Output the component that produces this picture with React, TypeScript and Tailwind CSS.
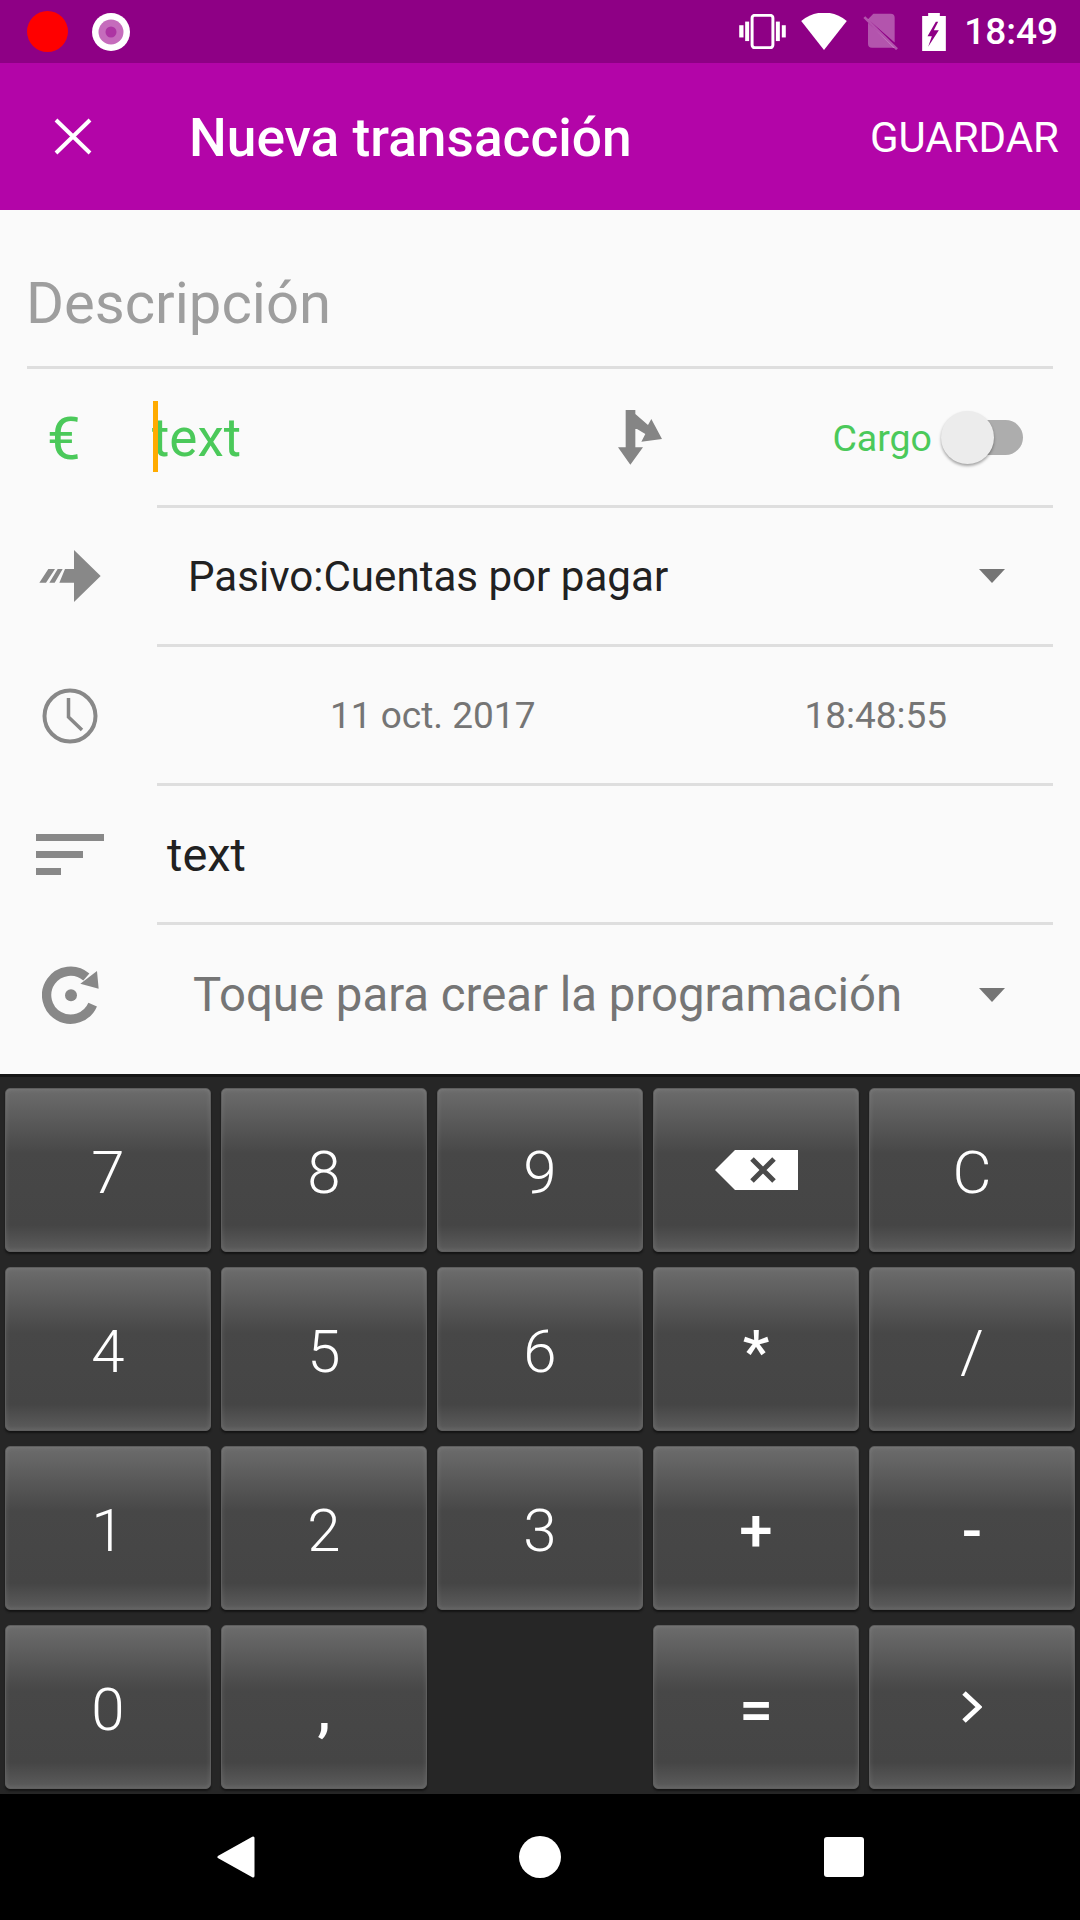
import React from "react";

const Key = ({ children }: { children?: React.ReactNode }) => (
  <div className="h-[164px] rounded-[5px] border border-[#5e5e5e] shadow-[inset_0_0_5px_rgba(255,255,255,0.12),0_2px_2px_#141414] bg-[linear-gradient(180deg,#6c6c6c_0%,#474747_40%,#454545_84%,#5c5c5c_100%)] flex items-center justify-center text-white text-[60px] font-[350] leading-none">
    {children}
  </div>
);

const T = ({ children }: { children: React.ReactNode }) => <span className="mt-[5px]">{children}</span>;
const S = ({ children }: { children: React.ReactNode }) => <span className="mt-[5px] font-medium">{children}</span>;

const Caret = () => (
  <svg width="26" height="14" viewBox="0 0 26 14"><path d="M0 0H26L13 14Z" fill="#757575" /></svg>
);

export default function App() {
  return (
    <div className="w-[1080px] h-[1920px] flex flex-col bg-[#fafafa] overflow-hidden font-['Roboto',sans-serif]">
      {/* status bar */}
      <div className="h-[63px] bg-[#8e0085] flex items-center pl-[27px] pr-[22px] text-white shrink-0">
        <div className="w-[41px] h-[41px] rounded-full bg-[#ff0000]" />
        <svg className="ml-[24px]" width="38" height="38" viewBox="0 0 38 38">
          <circle cx="19" cy="19" r="19" fill="#fff" />
          <circle cx="19" cy="19" r="12.500" fill="#c56cbc" />
          <circle cx="19" cy="19" r="5.500" fill="#ad35a3" />
        </svg>
        <div className="flex-1" />
        <svg width="47" height="35" viewBox="117 42 141 106" fill="#fff">
          <rect x="117" y="76" width="13" height="37" />
          <rect x="135" y="65" width="12" height="59" />
          <rect x="156" y="46" width="63" height="98" rx="8" fill="none" stroke="#fff" strokeWidth="9" />
          <rect x="228" y="65" width="12" height="59" />
          <rect x="246" y="76" width="12" height="37" />
        </svg>
        <svg className="ml-[15px]" width="46" height="37" viewBox="303 38 138 112">
          <path d="M303 62C345 28 399 28 441 62L372 150Z" fill="#fff" />
        </svg>
        <svg className="ml-[16px]" width="35" height="37" viewBox="490 42 105 110">
          <path d="M505 60 521 44H573a12 12 0 0 1 12 12V130ZM505 71 585 146a12 12 0 0 1-8 0H517a12 12 0 0 1-12-12Z" fill="#fff" fillOpacity="0.33" />
          <path d="M494 54 592 150" stroke="#fff" strokeOpacity="0.33" strokeWidth="8" />
        </svg>
        <svg className="ml-[24px]" width="24" height="38" viewBox="667 36 71 114">
          <path fillRule="evenodd" d="M685 36H720V45H738V150H667V45H685ZM708 62 683 106H696L685 137 717 88H702L715 62Z" fill="#fff" />
        </svg>
        <span className="ml-[18px] text-[37px] font-medium leading-none">18:49</span>
      </div>

      {/* toolbar */}
      <div className="h-[147px] bg-[#b305a8] flex items-center text-white shrink-0 pr-[21px]">
        <svg className="ml-[54px]" width="38" height="37" viewBox="0 0 38 37"><path d="M2 2 36 35M36 2 2 35" stroke="#fff" strokeWidth="4" /></svg>
        <span className="ml-[97px] mt-[4px] text-[53.25px] leading-none font-medium">Nueva transacción</span>
        <span className="ml-auto mt-[3px] text-[42px] leading-none">GUARDAR</span>
      </div>

      {/* form */}
      <div className="flex-1 flex flex-col text-[#212121]">
        <div className="h-[159px] mx-[27px] border-b-[3px] border-[#dedede] flex items-center pt-[30px] shrink-0">
          <span className="ml-[-1px] text-[58px] leading-none text-[#9e9e9e]">Descripción</span>
        </div>

        <div className="h-[139px] flex shrink-0">
          <div className="w-[157px] flex items-center pl-[47px]">
            <span className="text-[60px] leading-none text-[#4bc95a]">€</span>
          </div>
          <div className="flex-1 mr-[27px] border-b-[3px] border-[#dedede] flex items-center relative">
            <span className="ml-[-5px] mt-[3px] text-[53px] leading-none text-[#4bc95a]">text</span>
            <div className="absolute left-[-4px] top-[32px] w-[5px] h-[71px] bg-[#ffab00]" />
            <svg className="absolute left-[461px] top-[41px]" width="44" height="55" viewBox="115 58 132 165">
              <path d="M138 58H167V70L205 103 215 85 247 145 185 153 197 130 172 115 167 115V170H190L152 222 115 170H138Z" fill="#858585" />
            </svg>
            <span className="absolute right-[121px] top-[49px] text-[37.500px] leading-[40px] text-[#4bc95a]">Cargo</span>
            <div className="absolute left-[798px] top-[51px] w-[68px] h-[35px] rounded-full bg-[#adadad]" />
            <div className="absolute left-[784px] top-[42px] w-[53px] h-[53px] rounded-full bg-[#ececec] shadow-[0_2px_3px_rgba(0,0,0,0.35)]" />
          </div>
        </div>

        <div className="h-[139px] flex shrink-0">
          <div className="w-[157px] flex items-center pl-[39px] pb-[3px]">
            <svg width="62" height="52" viewBox="118 510 184 156">
              <path d="M222 510 302 588 222 666V608H178L195 567H222ZM118 608 145 567H165L138 608ZM148 608 173 567H188L164 608Z" fill="#888" />
            </svg>
          </div>
          <div className="flex-1 mr-[27px] border-b-[3px] border-[#dedede] flex items-center justify-between pl-[31px] pr-[48px]">
            <span className="mt-[2px] text-[42.100px] leading-none">Pasivo:Cuentas por pagar</span>
            <Caret />
          </div>
        </div>

        <div className="h-[139px] flex shrink-0">
          <div className="w-[157px] flex items-center pl-[42px] pb-[2px]">
            <svg width="56" height="56" viewBox="0 0 56 56" fill="none" stroke="#888">
              <circle cx="28" cy="28" r="25.500" strokeWidth="4" />
              <path d="M26.500 10V29L40 42" strokeWidth="3.500" />
            </svg>
          </div>
          <div className="flex-1 mr-[27px] border-b-[3px] border-[#dedede] flex items-center text-[#757575] text-[37px] leading-none">
            <span className="ml-[173px] mt-[1px]">11 oct. 2017</span>
            <span className="ml-[269px] mt-[1px]">18:48:55</span>
          </div>
        </div>

        <div className="h-[139px] flex shrink-0">
          <div className="w-[157px] flex items-center pl-[36px] pb-[2px]">
            <div className="flex flex-col gap-[10px]">
              <div className="w-[68px] h-[7px] bg-[#888]" />
              <div className="w-[47px] h-[7px] bg-[#888]" />
              <div className="w-[25px] h-[7px] bg-[#888]" />
            </div>
          </div>
          <div className="flex-1 mr-[27px] border-b-[3px] border-[#dedede] flex items-center pl-[10px]">
            <span className="mt-[1px] text-[47px] leading-none">text</span>
          </div>
        </div>

        <div className="h-[139px] flex shrink-0">
          <div className="w-[157px] flex items-center pl-[42px]">
            <svg width="57" height="58" viewBox="125 552 171 174">
              <path d="M277 668A72 72 0 1 1 258 585" fill="none" stroke="#888" strokeWidth="28" />
              <path d="M290 567 295 620 240 605Z" fill="#888" />
              <circle cx="212" cy="640" r="18" fill="#888" />
            </svg>
          </div>
          <div className="flex-1 mr-[27px] flex items-center justify-between pl-[36px] pr-[48px]">
            <span className="mt-[2px] text-[47.350px] leading-none text-[#757575]">Toque para crear la programación</span>
            <Caret />
          </div>
        </div>
      </div>

      {/* keypad */}
      <div className="h-[720px] shrink-0 bg-[#262626] border-t-[3px] border-[#161616] pt-[11px] px-[5px] grid grid-cols-5 gap-x-[10px] gap-y-[15px] content-start">
        <Key><T>7</T></Key><Key><T>8</T></Key><Key><T>9</T></Key>
        <Key>
          <svg width="83" height="40" viewBox="0 0 83 40">
            <path fillRule="evenodd" d="M20 0H83V40H20L0 20Z" fill="#fff" />
            <path d="M37 9 59 31M59 9 37 31" stroke="#4a4a4a" strokeWidth="5" />
          </svg>
        </Key>
        <Key><T>C</T></Key>
        <Key><T>4</T></Key><Key><T>5</T></Key><Key><T>6</T></Key><Key><S>*</S></Key><Key><T>/</T></Key>
        <Key><T>1</T></Key><Key><T>2</T></Key><Key><T>3</T></Key><Key><S>+</S></Key><Key><S>-</S></Key>
        <Key><T>0</T></Key><Key><S>,</S></Key><div />
        <Key><S>=</S></Key>
        <Key>
          <svg width="20" height="32" viewBox="0 0 20 32"><path d="M2 2 17 16 2 30" fill="none" stroke="#fff" strokeWidth="5" /></svg>
        </Key>
      </div>

      {/* nav bar */}
      <div className="h-[126px] shrink-0 bg-black flex items-center">
        <svg className="ml-[217px]" width="38" height="42" viewBox="0 0 38 42"><path d="M2 21 36 2V40Z" fill="#fff" stroke="#fff" strokeWidth="3" strokeLinejoin="round" /></svg>
        <div className="ml-[264px] w-[42px] h-[42px] rounded-full bg-white" />
        <div className="ml-[263px] w-[40px] h-[40px] rounded-[3px] bg-white" />
      </div>
    </div>
  );
}
